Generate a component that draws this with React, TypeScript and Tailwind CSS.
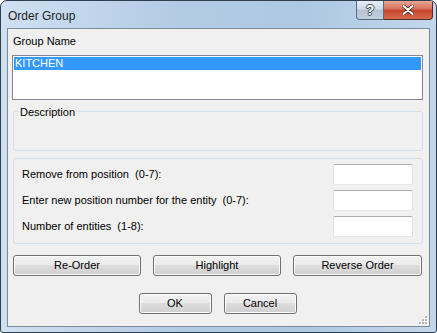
import React from "react";

const font = { fontFamily: '"Liberation Sans", Arial, sans-serif' };

function Btn({ label, w }: { label: string; w: string }) {
  return (
    <button
      className={`${w} h-[21px] rounded-[3px] border border-[#707070] bg-[linear-gradient(#f2f2f2_0%,#ebebeb_45%,#dddddd_50%,#cfcfcf_100%)] text-[11px] leading-[19px] text-black shadow-[inset_0_0_0_1px_#fcfcfc]`}
    >
      {label}
    </button>
  );
}

function Field({ label }: { label: string }) {
  return (
    <div className="flex h-[26px] items-center justify-between pl-[8px] pr-[9px]">
      <span className="whitespace-pre text-[11px] text-black">{label}</span>
      <input className="h-[21px] w-[80px] rounded-[2px] border border-[#abadb3] border-b-[#e3e9ef] border-l-[#e2e3ea] border-r-[#dbdfe6] bg-white outline-none" />
    </div>
  );
}

export default function App() {
  return (
    <div
      style={font}
      className="h-[333px] w-[437px] overflow-hidden rounded-t-[7px] rounded-b-[3px] border border-[#2f3f52] bg-[linear-gradient(90deg,#cfe0f2_0%,#b3cbe5_40%,#aec8e3_70%,#c3d7ec_100%)]"
    >
      {/* title bar */}
      <div className="flex h-[27px] items-start justify-between pl-[7px] pr-[3px]">
        <span className="pt-[6px] text-[12px] text-[#1e1e1e]">Order Group</span>
        <div className="flex">
          <div className="flex h-[19px] w-[28px] items-center justify-center rounded-bl-[4px] border border-t-0 border-[#5c6b7c] bg-[linear-gradient(#e6edf4_0%,#d0dbe6_45%,#b3c2d1_50%,#c2d0de_100%)]">
            <span className="text-[14px] font-bold leading-none text-white [text-shadow:1px_0_0_#3b4650,-1px_0_0_#3b4650,0_1px_0_#3b4650,0_-1px_0_#3b4650]">
              ?
            </span>
          </div>
          <div className="flex h-[19px] w-[49px] items-center justify-center rounded-br-[4px] border border-l-0 border-t-0 border-[#5c2a24] bg-[linear-gradient(#e8a493_0%,#d8725c_45%,#c7442b_50%,#d46a4c_100%)]">
            <svg width="12" height="10" viewBox="0 0 12 10">
              <path d="M1.5 1 L10.5 9 M10.5 1 L1.5 9" stroke="#3a1a14" strokeWidth="3.6" strokeLinecap="round" />
              <path d="M1.5 1 L10.5 9 M10.5 1 L1.5 9" stroke="#ffffff" strokeWidth="2.2" strokeLinecap="round" />
            </svg>
          </div>
        </div>
      </div>

      {/* client area */}
      <div className="relative mx-[6px] h-[299px] border border-[#7d8a97] bg-[#f0f0f0] pt-[6px] text-[11px] text-black">
        <div className="pl-[5px] leading-[13px]">Group Name</div>
        <div className="ml-[4px] mt-[7px] h-[45px] w-[411px] border border-[#828790] bg-white p-[1px]">
          <div className="h-[13px] bg-[#3399ff] pl-[1px] leading-[13px] text-white">KITCHEN</div>
        </div>

        <div className="relative ml-[5px] mt-[11px] h-[40px] w-[410px] rounded-[3px] border border-[#d5dfe5]">
          <span className="absolute left-[5px] top-[-6px] bg-[#f0f0f0] px-[1px] leading-[13px]">Description</span>
        </div>

        <div className="ml-[5px] mt-[7px] flex h-[86px] w-[410px] flex-col justify-center rounded-[3px] border border-[#d5dfe5] pb-[1px]">
          <Field label="Remove from position  (0-7):" />
          <Field label="Enter new position number for the entity  (0-7):" />
          <Field label="Number of entities  (1-8):" />
        </div>

        <div className="ml-[5px] mt-[11px] flex w-[409px] justify-between">
          <Btn label="Re-Order" w="w-[128px]" />
          <Btn label="Highlight" w="w-[128px]" />
          <Btn label="Reverse Order" w="w-[129px]" />
        </div>

        <div className="mt-[17px] flex justify-center gap-[12px] pr-[2px]">
          <Btn label="OK" w="w-[73px]" />
          <Btn label="Cancel" w="w-[73px]" />
        </div>

        {/* size grip */}
        <svg className="absolute bottom-[1px] right-[1px]" width="10" height="10" viewBox="0 0 10 10">
          {[
            [7, 1],
            [7, 4],
            [4, 4],
            [7, 7],
            [4, 7],
            [1, 7],
          ].map(([x, y], i) => (
            <g key={i}>
              <rect x={x + 1} y={y + 1} width="2" height="2" fill="#ffffff" />
              <rect x={x} y={y} width="2" height="2" fill="#b8bcc2" />
            </g>
          ))}
        </svg>
      </div>
    </div>
  );
}
